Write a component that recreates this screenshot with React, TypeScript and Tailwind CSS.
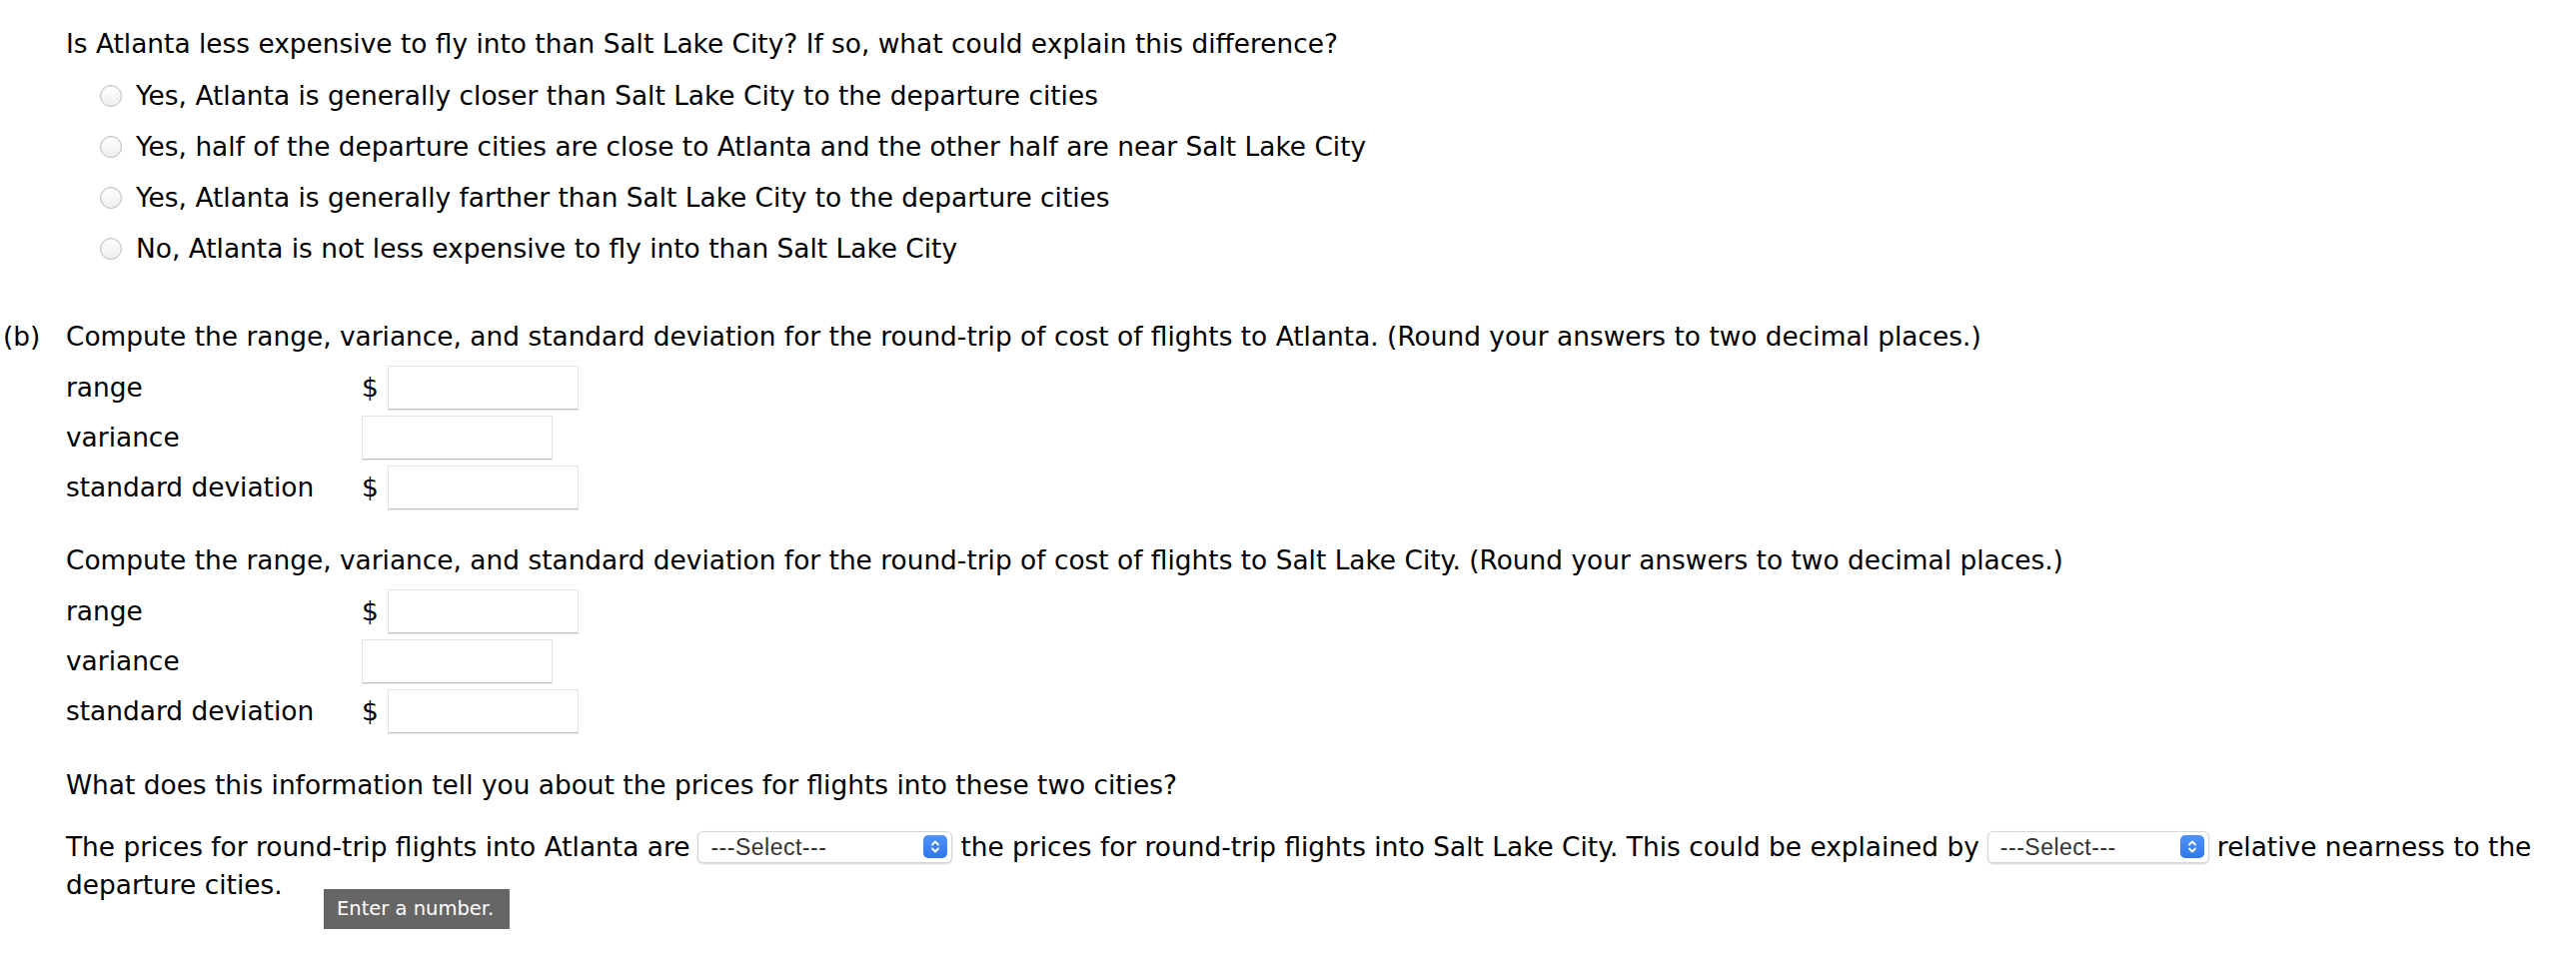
import React from 'react';

const options = [
  'Yes, Atlanta is generally closer than Salt Lake City to the departure cities',
  'Yes, half of the departure cities are close to Atlanta and the other half are near Salt Lake City',
  'Yes, Atlanta is generally farther than Salt Lake City to the departure cities',
  'No, Atlanta is not less expensive to fly into than Salt Lake City',
];

const Radio = () => (
  <span className="inline-block h-[22px] w-[22px] rounded-full border border-[#bdbdbd] bg-gradient-to-b from-[#ffffff] to-[#eeeeee] shadow-[inset_0_1px_1px_rgba(0,0,0,0.08)]" />
);

const NumInput = () => (
  <span className="inline-block h-[44px] w-[191px] border border-[#e3e3e3] border-b-[#c2c2c2] bg-white shadow-[0_1px_0_rgba(0,0,0,0.08)]" />
);

const InputRow = ({ label, dollar }: { label: string; dollar: boolean }) => (
  <div className="flex h-[44px] items-center">
    <div className="w-[296px] leading-[32px]">{label}</div>
    {dollar ? (
      <>
        <span className="w-[26px] leading-[32px]">$</span>
        <NumInput />
      </>
    ) : (
      <NumInput />
    )}
  </div>
);

const Select = ({ width }: { width: string }) => (
  <span
    className={`relative mx-[8px] inline-flex h-[32px] ${width} items-center rounded-[6px] border border-[#d6d6d6] bg-white pl-[12px] align-middle shadow-[0_1px_2px_rgba(0,0,0,0.18)]`}
  >
    <span className="text-[23px] leading-none tracking-[0.5px] text-[#333333] [font-family:'Liberation_Sans',Arial,sans-serif]">
      ---Select---
    </span>
    <span className="absolute right-[4px] top-[3px] flex h-[23px] w-[24px] items-center justify-center rounded-[5px] bg-gradient-to-b from-[#4f93f7] to-[#2f76ee]">
      <svg width="10" height="15" viewBox="0 0 10 15" fill="none" stroke="white" strokeWidth="1.8" strokeLinecap="round" strokeLinejoin="round">
        <path d="M2 5.5 L5 2.5 L8 5.5" />
        <path d="M2 9.5 L5 12.5 L8 9.5" />
      </svg>
    </span>
  </span>
);

const InputBlock = ({ heading, tag }: { heading: string; tag?: string }) => (
  <div>
    <div className="flex leading-[32px]">
      <div className="w-[63px]">{tag}</div>
      <div>{heading}</div>
    </div>
    <div className="mt-[13px] flex flex-col gap-[6px] pl-[63px]">
      <InputRow label="range" dollar />
      <InputRow label="variance" dollar={false} />
      <InputRow label="standard deviation" dollar />
    </div>
  </div>
);

export default function App() {
  return (
    <div className="relative min-h-[960px] w-[2578px] bg-white pl-[3px] pt-[28px] text-[26.4px] text-black [font-family:'DejaVu_Sans',Verdana,sans-serif]">
      <div className="pl-[63px]">
        <div className="leading-[32px]">
          Is Atlanta less expensive to fly into than Salt Lake City? If so, what could explain this difference?
        </div>
        <div className="mt-[10px] pl-[34px]">
          {options.map((o) => (
            <div key={o} className="flex h-[51px] items-center gap-[14px]">
              <Radio />
              <span className="leading-[32px]">{o}</span>
            </div>
          ))}
        </div>
      </div>

      <div className="mt-[47px]">
        <InputBlock
          tag="(b)"
          heading="Compute the range, variance, and standard deviation for the round-trip of cost of flights to Atlanta. (Round your answers to two decimal places.)"
        />
      </div>

      <div className="mt-[35px]">
        <InputBlock heading="Compute the range, variance, and standard deviation for the round-trip of cost of flights to Salt Lake City. (Round your answers to two decimal places.)" />
      </div>

      <div className="mt-[36px] pl-[63px]">
        <div className="leading-[32px]">What does this information tell you about the prices for flights into these two cities?</div>
        <div className="mt-[27px] leading-[38px]">
          <div className="flex h-[38px] items-center whitespace-nowrap">
            <span>The prices for round-trip flights into Atlanta are</span>
            <Select width="w-[255px]" />
            <span>the prices for round-trip flights into Salt Lake City. This could be explained by</span>
            <Select width="w-[222px]" />
            <span>relative nearness to the</span>
          </div>
          <div className="h-[38px]">departure cities.</div>
        </div>
      </div>

      <div className="absolute left-[324px] top-[890px] flex h-[40px] w-[186px] items-center bg-[#666666] pl-[13px] text-[19.5px] text-white">
        Enter a number.
      </div>
    </div>
  );
}
